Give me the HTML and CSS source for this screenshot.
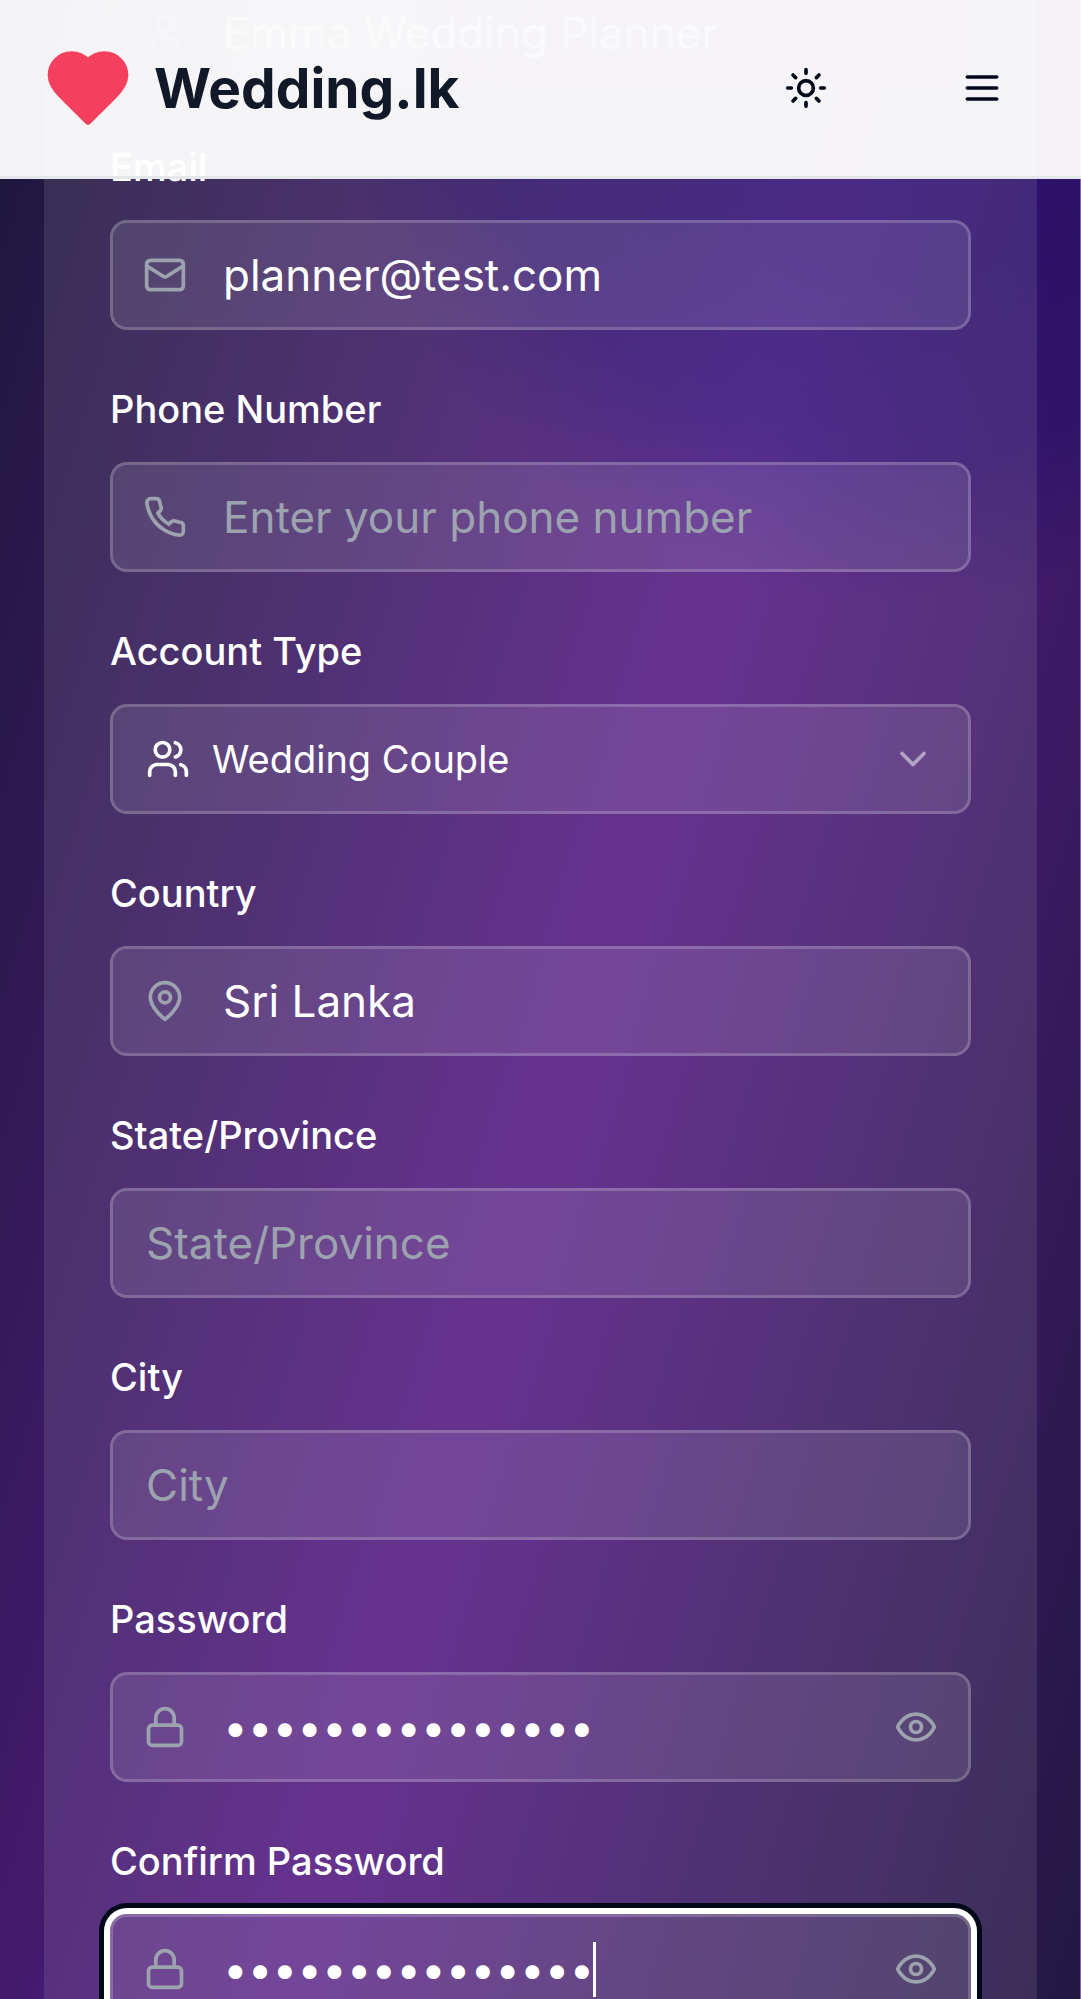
FILE: index.html
```html
<!DOCTYPE html>
<html lang="en">
<head>
<meta charset="utf-8">
<meta name="viewport" content="width=device-width, initial-scale=1">
<title>Wedding.lk – Create account</title>
<link rel="stylesheet" href="styles.css">
</head>
<body>
<svg class="sprite" aria-hidden="true">
  <symbol id="user" viewBox="0 0 24 24"><path d="M19 21v-2a4 4 0 0 0-4-4H9a4 4 0 0 0-4 4v2"/><circle cx="12" cy="7" r="4"/></symbol>
  <symbol id="mail" viewBox="0 0 24 24"><rect width="20" height="16" x="2" y="4" rx="2"/><path d="m22 7-8.97 5.7a1.94 1.94 0 0 1-2.06 0L2 7"/></symbol>
  <symbol id="phone" viewBox="0 0 24 24"><path d="M22 16.92v3a2 2 0 0 1-2.18 2 19.79 19.79 0 0 1-8.63-3.07 19.5 19.5 0 0 1-6-6 19.79 19.79 0 0 1-3.07-8.67A2 2 0 0 1 4.11 2h3a2 2 0 0 1 2 1.72 12.84 12.84 0 0 0 .7 2.81 2 2 0 0 1-.45 2.11L8.09 9.91a16 16 0 0 0 6 6l1.27-1.27a2 2 0 0 1 2.11-.45 12.84 12.84 0 0 0 2.81.7A2 2 0 0 1 22 16.92z"/></symbol>
  <symbol id="users" viewBox="0 0 24 24"><path d="M16 21v-2a4 4 0 0 0-4-4H6a4 4 0 0 0-4 4v2"/><circle cx="9" cy="7" r="4"/><path d="M22 21v-2a4 4 0 0 0-3-3.87"/><path d="M16 3.13a4 4 0 0 1 0 7.75"/></symbol>
  <symbol id="pin" viewBox="0 0 24 24"><path d="M20 10c0 6-8 12-8 12s-8-6-8-12a8 8 0 0 1 16 0Z"/><circle cx="12" cy="10" r="3"/></symbol>
  <symbol id="lock" viewBox="0 0 24 24"><rect width="18" height="11" x="3" y="11" rx="2"/><path d="M7 11V7a5 5 0 0 1 10 0v4"/></symbol>
  <symbol id="eye" viewBox="0 0 24 24"><path d="M2 12s3-7 10-7 10 7 10 7-3 7-10 7-10-7-10-7Z"/><circle cx="12" cy="12" r="3"/></symbol>
  <symbol id="chevron" viewBox="0 0 24 24"><path d="m6 9 6 6 6-6"/></symbol>
  <symbol id="sun" viewBox="0 0 24 24"><circle cx="12" cy="12" r="4"/><path d="M12 2v2M12 20v2M4.93 4.93l1.41 1.41M17.66 17.66l1.41 1.41M2 12h2M20 12h2M6.34 17.66l-1.41 1.41M19.07 4.93l-1.41 1.41"/></symbol>
  <symbol id="menu" viewBox="0 0 24 24"><path d="M4 12h16M4 6h16M4 18h16"/></symbol>
  <symbol id="heart" viewBox="0 0 24 24"><path d="M19 14c1.49-1.46 3-3.21 3-5.5A5.5 5.5 0 0 0 16.5 3c-1.76 0-3 .5-4.5 2-1.5-1.5-2.74-2-4.5-2A5.5 5.5 0 0 0 2 8.5c0 2.3 1.5 4.05 3 5.5l7 7Z"/></symbol>
</svg>

<header class="topbar">
  <a class="brand" href="#"><svg class="brand-icon"><use href="#heart"/></svg><span>Wedding.lk</span></a>
  <div class="actions">
    <button class="icon-button" type="button" aria-label="Toggle theme"><svg class="icon"><use href="#sun"/></svg></button>
    <button class="icon-button" type="button" aria-label="Open menu"><svg class="icon"><use href="#menu"/></svg></button>
  </div>
</header>

<main class="page">
  <form class="card">
    <div class="field">
      <div class="control control-icon control-faded"><svg class="icon"><use href="#user"/></svg><input type="text" aria-label="Full name" value="Emma Wedding Planner"></div>
    </div>
    <div class="field">
      <label for="email">Email</label>
      <div class="control control-icon"><svg class="icon"><use href="#mail"/></svg><input id="email" type="email" value="planner@test.com"></div>
    </div>
    <div class="field">
      <label for="tel">Phone Number</label>
      <div class="control control-icon"><svg class="icon"><use href="#phone"/></svg><input id="tel" type="tel" placeholder="Enter your phone number"></div>
    </div>
    <div class="field">
      <label for="type">Account Type</label>
      <div class="control control-select"><svg class="icon"><use href="#users"/></svg><select id="type"><option>Wedding Couple</option><option>Wedding Planner</option></select><svg class="icon chevron"><use href="#chevron"/></svg></div>
    </div>
    <div class="field">
      <label for="country">Country</label>
      <div class="control control-icon"><svg class="icon"><use href="#pin"/></svg><input id="country" type="text" value="Sri Lanka"></div>
    </div>
    <div class="field">
      <label for="state">State/Province</label>
      <div class="control"><input id="state" type="text" placeholder="State/Province"></div>
    </div>
    <div class="field">
      <label for="city">City</label>
      <div class="control"><input id="city" type="text" placeholder="City"></div>
    </div>
    <div class="field">
      <label for="password">Password</label>
      <div class="control control-icon"><svg class="icon"><use href="#lock"/></svg><input id="password" type="password" value="weddingplanner1"><button class="reveal" type="button" aria-label="Show password"><svg class="icon"><use href="#eye"/></svg></button></div>
    </div>
    <div class="field">
      <label for="confirm">Confirm Password</label>
      <div class="control control-icon control-active"><svg class="icon"><use href="#lock"/></svg><span class="typed"><input id="confirm" type="password" value="weddingplanner1"><span class="caret"></span></span><button class="reveal" type="button" aria-label="Show password"><svg class="icon"><use href="#eye"/></svg></button></div>
    </div>
  </form>
</main>
</body>
</html>
```
FILE: styles.css
```css
* {
  box-sizing: border-box;
}

html {
  overflow: hidden;
}

body {
  margin: 0;
  background: #0f172a;
  color: #fff;
  font-family: Inter, "Liberation Sans", sans-serif;
}

.sprite {
  position: absolute;
  width: 0;
  height: 0;
}

.icon,
.brand-icon {
  flex: none;
  width: 44px;
  height: 44px;
  fill: none;
  stroke: currentColor;
  stroke-width: 2;
  stroke-linecap: round;
  stroke-linejoin: round;
}

/* Top bar, floating over the scrolled form */
.topbar {
  position: fixed;
  inset: 0 0 auto;
  z-index: 10;
  display: flex;
  align-items: center;
  justify-content: space-between;
  padding: 33px 44px;
  border-bottom: 3px solid #e5e7eb;
  background: rgba(255, 255, 255, 0.95);
  color: #020817;
}

.brand {
  display: flex;
  align-items: center;
  gap: 22px;
  color: #111827;
  font-size: 55px;
  font-weight: 700;
  line-height: 74px;
  text-decoration: none;
}

.brand-icon {
  width: 88px;
  height: 88px;
  fill: currentColor;
  color: #f43f5e;
}

.actions {
  display: flex;
  gap: 66px;
}

.icon-button {
  display: grid;
  place-items: center;
  width: 110px;
  height: 110px;
  padding: 0;
  border: 0;
  background: none;
  color: inherit;
}

/* Page and form card */
.page {
  margin-top: -22px;
  padding: 0 43px 0 44px;
  border-right: 1px solid #7d6a98;
  background-image:
    radial-gradient(circle at 900px 57px, #a3abec 0, #a3abec 240px, #bac4fa 420px, #fff 570px),
    linear-gradient(to bottom right, #0f172a, #541b82 49%, #541b82 51%, #0f172a);
  background-position: 0 0, 0 -620px;
  background-size: auto, 100% 3600px;
  background-blend-mode: multiply;
}

.card {
  display: flex;
  flex-direction: column;
  gap: 59px;
  padding: 0 66px 66px;
  background: rgba(255, 255, 255, 0.1);
}

.field {
  display: flex;
  flex-direction: column;
  gap: 33px;
}

label {
  font-size: 38px;
  font-weight: 500;
  line-height: 40px;
}

.control {
  display: flex;
  align-items: center;
  gap: 36px;
  height: 110px;
  padding: 0 33px;
  border: 3px solid rgba(255, 255, 255, 0.2);
  border-radius: 17px;
  background: rgba(255, 255, 255, 0.1);
  color: #9ca3af;
}

.control-icon {
  padding: 0 30px;
}

.control-faded {
  opacity: 0.5;
}

input,
select {
  flex: 1;
  min-width: 0;
  padding: 0;
  border: 0;
  outline: 0;
  background: none;
  color: #fff;
  font: 400 44px/66px Inter, "Liberation Sans", sans-serif;
}

input::placeholder {
  color: #9ca3af;
  opacity: 1;
}

select {
  appearance: none;
  font-size: 38px;
}

.control-select {
  gap: 22px;
  color: #fff;
}

.chevron {
  opacity: 0.5;
}

.reveal {
  display: flex;
  padding: 0;
  border: 0;
  background: none;
  color: inherit;
}

.control-active {
  box-shadow: 0 0 0 6px #fff, 0 0 0 11px #020817;
}

.typed {
  position: relative;
  display: flex;
  flex: 1;
  min-width: 0;
}

.caret {
  position: absolute;
  top: 6px;
  left: 370px;
  width: 3px;
  height: 55px;
  background: #fff;
}
```
